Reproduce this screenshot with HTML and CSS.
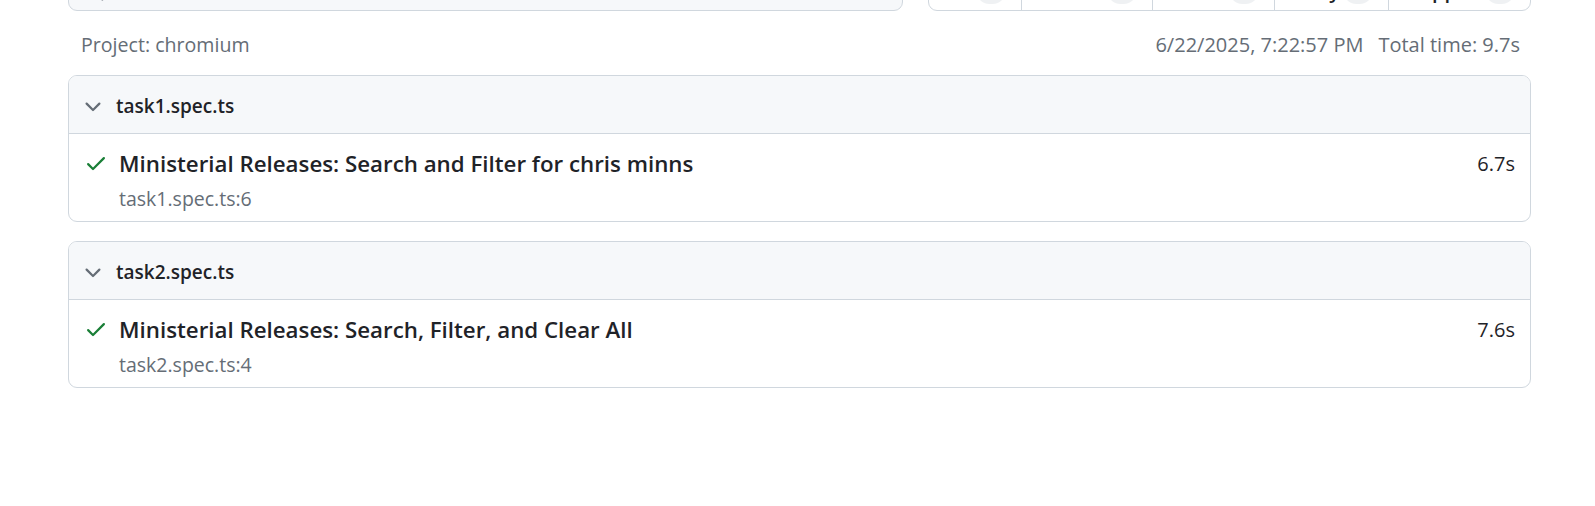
FILE: index.html
```html
<!DOCTYPE html>
<html lang="en">
<head>
<meta charset="utf-8">
<title>Playwright Test Report</title>
<link rel="stylesheet" href="styles.css">
</head>
<body>
<div class="report">
  <div class="topbar">
    <div class="search">
      <svg class="search-icon" viewBox="0 0 16 16" width="24" height="24"><path d="M10.68 11.74a6 6 0 0 1-7.922-8.982 6 6 0 0 1 8.982 7.922l3.04 3.04a.749.749 0 0 1-.326 1.275.749.749 0 0 1-.734-.215ZM11.5 7a4.499 4.499 0 1 0-8.997 0A4.499 4.499 0 0 0 11.5 7Z"/></svg>
    </div>
    <nav class="filters">
      <a class="filter">All <span class="counter">2</span></a>
      <a class="filter">Passed <span class="counter">2</span></a>
      <a class="filter">Failed <span class="counter">0</span></a>
      <a class="filter">Flaky <span class="counter">0</span></a>
      <a class="filter">Skipped <span class="counter">0</span></a>
    </nav>
  </div>

  <div class="superheader">
    <div class="project">Project: chromium</div>
    <div class="meta">
      <span>6/22/2025, 7:22:57 PM</span>
      <span>Total time: 9.7s</span>
    </div>
  </div>

  <div class="chips">
    <section class="chip">
      <div class="chip-header">
        <svg class="chevron" viewBox="0 0 16 16" width="24" height="24"><path d="M12.78 5.22a.749.749 0 0 1 0 1.06l-4.25 4.25a.749.749 0 0 1-1.06 0L3.22 6.28a.749.749 0 0 1 .326-1.275.749.749 0 0 1 .734.215L8 8.94l3.72-3.72a.749.749 0 0 1 1.06 0Z"/></svg>
        <span>task1.spec.ts</span>
      </div>
      <div class="chip-body">
        <div class="test-row">
          <svg class="check" viewBox="0 0 16 16" width="24" height="24"><path d="M13.78 4.22a.75.75 0 0 1 0 1.06l-7.25 7.25a.75.75 0 0 1-1.06 0L2.22 9.28a.751.751 0 0 1 .018-1.042.751.751 0 0 1 1.042-.018L6 10.940l6.72-6.72a.75.75 0 0 1 1.060 0Z"/></svg>
          <span class="test-title">Ministerial Releases: Search and Filter for chris minns</span>
          <span class="duration">6.7s</span>
        </div>
        <div class="details">task1.spec.ts:6</div>
      </div>
    </section>

    <section class="chip">
      <div class="chip-header">
        <svg class="chevron" viewBox="0 0 16 16" width="24" height="24"><path d="M12.78 5.22a.749.749 0 0 1 0 1.06l-4.25 4.25a.749.749 0 0 1-1.06 0L3.22 6.28a.749.749 0 0 1 .326-1.275.749.749 0 0 1 .734.215L8 8.94l3.72-3.72a.749.749 0 0 1 1.06 0Z"/></svg>
        <span>task2.spec.ts</span>
      </div>
      <div class="chip-body">
        <div class="test-row">
          <svg class="check" viewBox="0 0 16 16" width="24" height="24"><path d="M13.78 4.22a.75.75 0 0 1 0 1.06l-7.25 7.25a.75.75 0 0 1-1.06 0L2.22 9.28a.751.751 0 0 1 .018-1.042.751.751 0 0 1 1.042-.018L6 10.940l6.72-6.72a.75.75 0 0 1 1.060 0Z"/></svg>
          <span class="test-title">Ministerial Releases: Search, Filter, and Clear All</span>
          <span class="duration">7.6s</span>
        </div>
        <div class="details">task2.spec.ts:4</div>
      </div>
    </section>
  </div>
</div>
</body>
</html>
```

FILE: styles.css
```css
* {
  box-sizing: border-box;
}

html, body {
  margin: 0;
  background: #ffffff;
}

body {
  font-family: "Open Sans", "Noto Sans", "DejaVu Sans", sans-serif;
  font-size: 20px;
  color: #1f2328;
  overflow: hidden;
}

.report {
  margin: -37px 64px 0 68px;
}

/* ---- top bar (scrolled partly out of view) ---- */
.topbar {
  display: flex;
  gap: 25px;
  height: 48px;
}

.search {
  flex: 0 0 835px;
  display: flex;
  align-items: center;
  padding: 6px 12px 0;
  background: #f6f8fa;
  border: 1px solid #d0d7de;
  border-radius: 9px;
}

.search-icon {
  fill: #656d76;
  flex: none;
}

.filters {
  flex: 1;
  display: flex;
  border: 1px solid #d0d7de;
  border-radius: 9px;
  overflow: hidden;
}

.filter {
  display: flex;
  align-items: center;
  justify-content: space-between;
  padding: 6px 15px 0;
  font-weight: 600;
  font-size: 20px;
  color: #1f2328;
  border-left: 1px solid #d0d7de;
}

.filter:first-child { border-left: none; width: 92px; }
.filter:nth-child(2) { width: 131px; }
.filter:nth-child(3) { width: 122px; }
.filter:nth-child(4) { width: 114px; }
.filter:nth-child(5) { flex: 1; }

.counter {
  display: inline-block;
  min-width: 30px;
  padding: 0 9px;
  line-height: 27px;
  font-size: 17px;
  font-weight: 500;
  text-align: center;
  border-radius: 2em;
  background: rgba(175, 184, 193, 0.2);
}

/* ---- superheader ---- */
.superheader {
  display: flex;
  justify-content: space-between;
  padding: 19px 11px 0 13px;
  line-height: 30px;
  font-size: 20px;
  color: #656d76;
}

.project {
  font-size: 19.6px;
}

.meta {
  display: flex;
  gap: 15px;
}

/* ---- file chips ---- */
.chips {
  display: flex;
  flex-direction: column;
  gap: 19px;
  margin-top: 15px;
}

.chip {
  border: 1px solid #d0d7de;
  border-radius: 9px;
  overflow: hidden;
}

.chip-header {
  display: flex;
  align-items: center;
  gap: 11px;
  height: 58px;
  padding: 0 12px;
  background: #f6f8fa;
  border-bottom: 1px solid #d0d7de;
  font-weight: 600;
  font-size: 19px;
}

.chip-header span {
  margin-top: 2px;
}

.chevron {
  fill: #656d76;
  flex: none;
  margin-top: 4px;
}

.chip-body {
  padding: 5px 15px 10px;
}

.test-row {
  display: flex;
  align-items: center;
  height: 48px;
}

.check {
  fill: #1a7f37;
  flex: none;
  margin-right: 11px;
}

.test-title {
  flex: 1;
  font-weight: 600;
  font-size: 22.3px;
}

.duration {
  font-size: 20px;
}

.details {
  padding-left: 35px;
  line-height: 24px;
  font-size: 19.5px;
  color: #656d76;
}
```
